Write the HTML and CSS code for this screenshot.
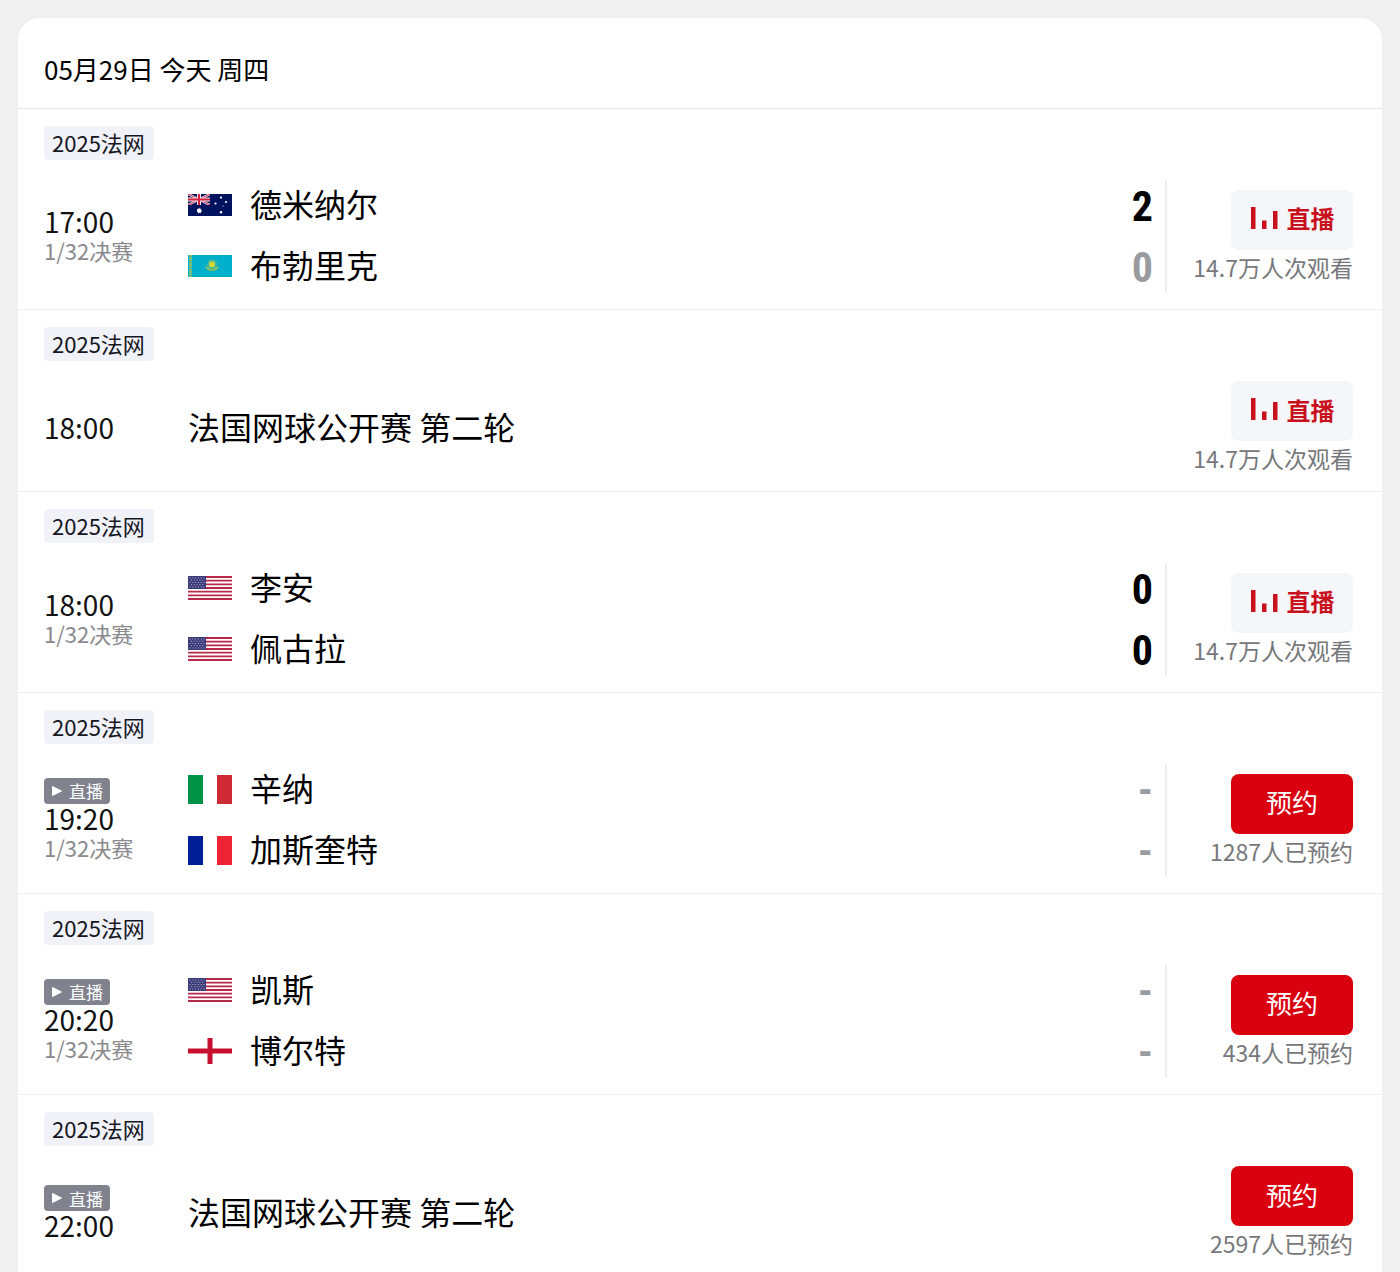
FILE: index.html
```html
<!DOCTYPE html>
<html lang="zh-CN">
<head>
  <meta charset="UTF-8">
  <meta name="viewport" content="width=device-width, initial-scale=1.0">
  <title>2025法网 赛程</title>
  <link rel="stylesheet" href="styles.css">
</head>
<body>
  <!-- 国旗和图标 -->
  <svg class="sprite" aria-hidden="true">
    <symbol id="flag-au" viewBox="0 0 44 22">
      <rect width="44" height="22" fill="#00135f"/>
      <path d="M0 0L22 11M22 0L0 11" stroke="#e8d5e4" stroke-width="2.4"/>
      <path d="M0 0L22 11M22 0L0 11" stroke="#d9374f" stroke-width="1"/>
      <path d="M11 0V11M0 5.5H22" stroke="#f1e4ec" stroke-width="4"/>
      <path d="M11 0V11M0 5.5H22" stroke="#d8203c" stroke-width="2"/>
      <path d="M0 11H22V13H0ZM22 0H24V13H22Z" fill="#00135f"/>
      <circle cx="11" cy="16.5" r="2" fill="#fff"/>
      <path d="M11 13.4l.8 1.6 1.6-.3-.4 1.5 1.3 1-1.5.6v1.6l-1.3-.8-1.5.8v-1.6l-1.4-.6 1.3-1-.4-1.5 1.6.3z" fill="#fff"/>
      <g fill="#fff">
        <circle cx="33" cy="3.6" r="1.1"/>
        <circle cx="27.5" cy="9.5" r="1.1"/>
        <circle cx="38" cy="8" r="1.1"/>
        <circle cx="33" cy="18.3" r="1.2"/>
        <circle cx="35" cy="12" r=".6"/>
      </g>
    </symbol>
    <symbol id="flag-kz" viewBox="0 0 44 22">
      <rect width="44" height="22" fill="#00afca"/>
      <path d="M2.5 0V22" stroke="#a9c65a" stroke-width="2.6" stroke-dasharray="1.6 .7"/>
      <circle cx="24" cy="9.5" r="3" fill="#d9d531"/>
      <circle cx="24" cy="9.5" r="4.2" fill="none" stroke="#c6cd3d" stroke-width="1.2" stroke-dasharray=".8 .8"/>
      <path d="M17 11c2 0 3 3 7 4 4-1 5-4 7-4-1 3-4 5-7 5s-6-2-7-5z" fill="#a3c451"/>
    </symbol>
    <symbol id="flag-us" viewBox="0 0 44 24">
      <rect width="44" height="24" fill="#fff"/>
      <path d="M0 1H44M0 4.7H44M0 8.4H44M0 12H44M0 15.7H44M0 19.3H44M0 23H44" stroke="#b5294a" stroke-width="1.8"/>
      <rect width="18" height="13" fill="#3c3b7a"/>
      <path d="M1.5 2H17M1.5 6.5H17M1.5 11H17" stroke="#b4b4d2" stroke-dasharray="1 1.8"/>
      <path d="M3 4.2H17M3 8.7H17" stroke="#b4b4d2" stroke-dasharray="1 1.8"/>
    </symbol>
    <symbol id="flag-it" viewBox="0 0 44 29">
      <rect width="44" height="29" fill="#fff"/>
      <rect width="15" height="29" fill="#009246"/>
      <rect x="29" width="15" height="29" fill="#ce2b37"/>
    </symbol>
    <symbol id="flag-fr" viewBox="0 0 44 29">
      <rect width="44" height="29" fill="#fff"/>
      <rect width="15" height="29" fill="#001e96"/>
      <rect x="29" width="15" height="29" fill="#ee2436"/>
    </symbol>
    <symbol id="flag-en" viewBox="0 0 44 26">
      <rect width="44" height="26" fill="#fff"/>
      <path d="M22 0V26M0 13H44" stroke="#c8102e" stroke-width="5"/>
    </symbol>
    <symbol id="icon-live" viewBox="0 0 28 22">
      <path d="M1 0H5.5V22H1ZM12 13.5H16.5V22H12ZM23 4H27.5V22H23Z" fill="#c9101d"/>
    </symbol>
    <symbol id="icon-play" viewBox="0 0 12 12">
      <path d="M1.5 1.5L10.5 6L1.5 10.5Z" fill="#fff" stroke="#fff" stroke-linejoin="round"/>
    </symbol>
  </svg>

  <main class="card">
    <h1 class="date">05月29日 今天 周四</h1>
    <ul class="match-list">
      <li class="match">
        <span class="tag">2025法网</span>
        <div class="match-body">
          <div class="when">
            <time class="time">17:00</time>
            <span class="round">1/32决赛</span>
          </div>
          <div class="teams">
            <div class="team">
              <svg class="flag flag-wide"><use href="#flag-au"/></svg>
              <span class="name">德米纳尔</span>
              <span class="score">2</span>
            </div>
            <div class="team">
              <svg class="flag flag-wide"><use href="#flag-kz"/></svg>
              <span class="name">布勃里克</span>
              <span class="score score-lose">0</span>
            </div>
          </div>
          <div class="action action-line">
            <button class="btn btn-live" type="button"><svg class="icon-live"><use href="#icon-live"/></svg>直播</button>
            <span class="count">14.7万人次观看</span>
          </div>
        </div>
      </li>

      <li class="match">
        <span class="tag">2025法网</span>
        <div class="match-body">
          <div class="when">
            <time class="time">18:00</time>
          </div>
          <div class="title">法国网球公开赛 第二轮</div>
          <div class="action">
            <button class="btn btn-live" type="button"><svg class="icon-live"><use href="#icon-live"/></svg>直播</button>
            <span class="count">14.7万人次观看</span>
          </div>
        </div>
      </li>

      <li class="match">
        <span class="tag">2025法网</span>
        <div class="match-body">
          <div class="when">
            <time class="time">18:00</time>
            <span class="round">1/32决赛</span>
          </div>
          <div class="teams">
            <div class="team">
              <svg class="flag flag-us"><use href="#flag-us"/></svg>
              <span class="name">李安</span>
              <span class="score">0</span>
            </div>
            <div class="team">
              <svg class="flag flag-us"><use href="#flag-us"/></svg>
              <span class="name">佩古拉</span>
              <span class="score">0</span>
            </div>
          </div>
          <div class="action action-line">
            <button class="btn btn-live" type="button"><svg class="icon-live"><use href="#icon-live"/></svg>直播</button>
            <span class="count">14.7万人次观看</span>
          </div>
        </div>
      </li>

      <li class="match">
        <span class="tag">2025法网</span>
        <div class="match-body">
          <div class="when">
            <span class="badge"><svg class="icon-play"><use href="#icon-play"/></svg>直播</span>
            <time class="time">19:20</time>
            <span class="round">1/32决赛</span>
          </div>
          <div class="teams">
            <div class="team">
              <svg class="flag"><use href="#flag-it"/></svg>
              <span class="name">辛纳</span>
              <span class="score score-none">-</span>
            </div>
            <div class="team">
              <svg class="flag"><use href="#flag-fr"/></svg>
              <span class="name">加斯奎特</span>
              <span class="score score-none">-</span>
            </div>
          </div>
          <div class="action action-line">
            <button class="btn btn-book" type="button">预约</button>
            <span class="count">1287人已预约</span>
          </div>
        </div>
      </li>

      <li class="match">
        <span class="tag">2025法网</span>
        <div class="match-body">
          <div class="when">
            <span class="badge"><svg class="icon-play"><use href="#icon-play"/></svg>直播</span>
            <time class="time">20:20</time>
            <span class="round">1/32决赛</span>
          </div>
          <div class="teams">
            <div class="team">
              <svg class="flag flag-us"><use href="#flag-us"/></svg>
              <span class="name">凯斯</span>
              <span class="score score-none">-</span>
            </div>
            <div class="team">
              <svg class="flag flag-en"><use href="#flag-en"/></svg>
              <span class="name">博尔特</span>
              <span class="score score-none">-</span>
            </div>
          </div>
          <div class="action action-line">
            <button class="btn btn-book" type="button">预约</button>
            <span class="count">434人已预约</span>
          </div>
        </div>
      </li>

      <li class="match">
        <span class="tag">2025法网</span>
        <div class="match-body">
          <div class="when">
            <span class="badge"><svg class="icon-play"><use href="#icon-play"/></svg>直播</span>
            <time class="time">22:00</time>
          </div>
          <div class="title">法国网球公开赛 第二轮</div>
          <div class="action">
            <button class="btn btn-book" type="button">预约</button>
            <span class="count">2597人已预约</span>
          </div>
        </div>
      </li>
    </ul>
  </main>
</body>
</html>
```

FILE: styles.css
```css
* {
  box-sizing: border-box;
}
body {
  margin: 0;
  padding: 18px 18px 0;
  min-height: 100vh;
  display: flex;
  flex-direction: column;
  background: #f0f0f0;
  color: #000;
  font-family: "Noto Sans CJK SC", sans-serif;
}
.sprite {
  display: none;
}
.card {
  flex: 1;
  background: #fff;
  border-radius: 22px 22px 0 0;
}
.date {
  margin: 0;
  padding: 13px 26px 1px;
  font-size: 26px;
  font-weight: 400;
  line-height: 76px;
  border-bottom: 1px solid #e6e6e6;
}
.match-list {
  margin: 0;
  padding: 0;
  list-style: none;
}
.match {
  padding: 17px 29px 16px 26px;
  border-bottom: 1px solid #efefef;
}
.match:last-child {
  padding-bottom: 0;
  border-bottom: none;
}
.tag {
  display: block;
  width: fit-content;
  padding: 0 9px 2px 8px;
  border-radius: 4px;
  background: #f0f2f7;
  color: #15161f;
  font-size: 22px;
  line-height: 32px;
}
.match-body {
  display: flex;
  margin-top: 20px;
}

/* 时间 */
.when {
  flex: 0 0 144px;
  display: flex;
  flex-direction: column;
  justify-content: center;
  align-items: flex-start;
  padding-bottom: 2px;
}
.badge {
  display: flex;
  align-items: center;
  gap: 6px;
  height: 26px;
  padding: 0 7px;
  border-radius: 4px;
  background: #80828d;
  color: #fff;
  font-size: 17px;
}
.icon-play {
  width: 12px;
  height: 12px;
}
.time {
  color: #111;
  font-size: 28px;
  line-height: 28px;
}
.round {
  color: #8a8a8e;
  font-size: 22px;
  line-height: 30px;
}

/* 对阵 */
.teams {
  flex: 1;
  display: flex;
  flex-direction: column;
  gap: 11px;
  padding-right: 12px;
}
.team {
  display: flex;
  align-items: center;
  height: 50px;
}
.flag {
  width: 44px;
  height: 29px;
  margin-right: 18px;
}
.flag-wide {
  height: 22px;
}
.flag-us {
  height: 24px;
}
.flag-en {
  height: 26px;
}
.name {
  flex: 1;
  padding-bottom: 4px;
  font-size: 32px;
}
.score {
  padding-top: 4px;
  font-family: "Roboto Condensed", Roboto, sans-serif;
  font-size: 42px;
  font-weight: 700;
  line-height: 46px;
}
.score-lose,
.score-none {
  color: #999b9f;
}
.title {
  flex: 1;
  align-self: center;
  padding-bottom: 4px;
  font-size: 32px;
}

/* 右侧按钮 */
.action {
  flex: 0 0 188px;
  display: flex;
  flex-direction: column;
  justify-content: center;
  align-items: flex-end;
}
.action-line {
  min-height: 113px;
  border-left: 2px solid #eceef0;
}
.btn {
  display: flex;
  align-items: center;
  justify-content: center;
  gap: 9px;
  width: 122px;
  height: 60px;
  padding: 0 0 4px;
  border: none;
  border-radius: 8px;
  font-family: inherit;
  cursor: pointer;
}
.btn-live {
  background: #f5f6fa;
  color: #c9101d;
  font-size: 24px;
  font-weight: 700;
}
.btn-book {
  background: #d9000f;
  color: #fff;
  font-size: 26px;
}
.icon-live {
  width: 28px;
  height: 22px;
}
.count {
  color: #77787b;
  font-size: 23px;
  line-height: 34px;
}
```
